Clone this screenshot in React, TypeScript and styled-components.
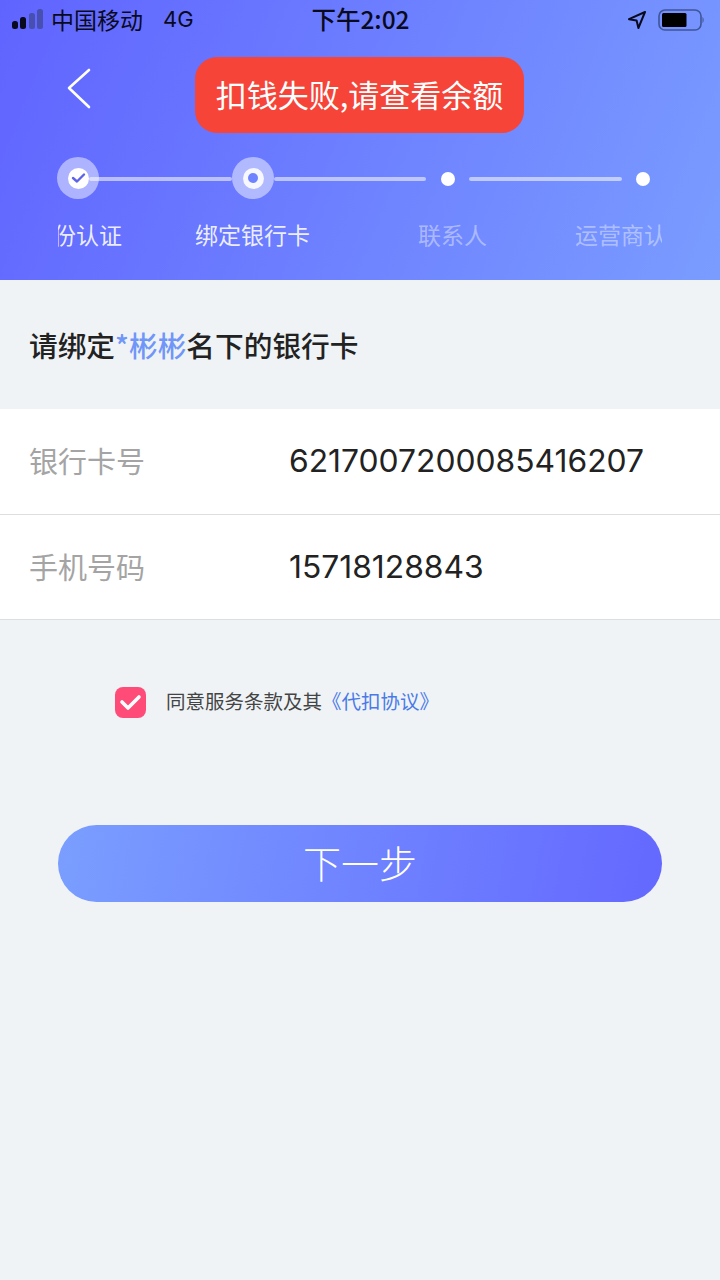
import React from 'react';
import styled, { createGlobalStyle } from 'styled-components';

const CJK = `"Noto Sans CJK SC", "Noto Sans", sans-serif`;
const NUM = `Inter, Roboto, "Noto Sans CJK SC", sans-serif`;

const GlobalStyle = createGlobalStyle`
  html, body { margin: 0; padding: 0; background: #eff3f6; }
  * { box-sizing: border-box; }
`;

const Page = styled.div`
  position: relative;
  width: 720px;
  height: 1280px;
  overflow: hidden;
  background: #eff3f6;
  font-family: ${CJK};
`;

const Header = styled.header`
  height: 280px;
  background: linear-gradient(112deg, #6064ff 0%, #6d80ff 50%, #7a9cff 100%);
`;

const StatusBar = styled.div`
  height: 40px;
  display: grid;
  grid-template-columns: 1fr auto 1fr;
  align-items: center;
  padding: 0 16px 0 12px;
  color: #0a0a1e;
`;

const StatusLeft = styled.div`
  display: flex;
  align-items: center;
  font-size: 23px;
`;

const SignalSlot = styled.div`
  display: flex;
  margin-bottom: 2px;
`;

const Carrier = styled.span`
  margin-left: 7px;
  padding-bottom: 2px;
`;

const Network = styled.span`
  margin-left: 20px;
  padding-bottom: 2px;
  font-family: ${NUM};
  font-size: 22px;
`;

const Clock = styled.div`
  padding-bottom: 3px;
  font-size: 24.5px;
  font-weight: 500;
  margin-left: 5px;
`;

const StatusRight = styled.div`
  display: flex;
  justify-content: flex-end;
  align-items: center;
  gap: 12px;
`;

const NavRow = styled.div`
  height: 97px;
  display: flex;
  align-items: center;
  padding: 0 0 0 66px;
`;

const Toast = styled.div`
  position: absolute;
  left: 195px;
  top: 57px;
  width: 329px;
  height: 76px;
  padding-bottom: 3px;
  border-radius: 22px;
  background: #f64438;
  color: #fff;
  font-size: 31px;
  display: flex;
  align-items: center;
  justify-content: center;
  white-space: nowrap;
`;

const Stepper = styled.div`
  display: flex;
  align-items: center;
  height: 42px;
  margin-top: 20px;
  padding-left: 57px;
`;

const Halo = styled.div`
  position: relative;
  z-index: 1;
  flex: none;
  width: 42px;
  height: 42px;
  border-radius: 50%;
  background: rgba(255, 255, 255, 0.48);
  display: flex;
  align-items: center;
  justify-content: center;
`;

const HaloCore = styled.div`
  width: 21px;
  height: 21px;
  border-radius: 50%;
  background: #fff;
  display: flex;
  align-items: center;
  justify-content: center;
`;

const HaloRing = styled(HaloCore)`
  background: rgba(255, 255, 255, 0.88);
`;

const HaloHole = styled.div`
  width: 10px;
  height: 10px;
  border-radius: 50%;
  background: #6f82ff;
`;

const Line = styled.div<{ $width: number; $left?: number }>`
  flex: none;
  width: ${p => p.$width}px;
  height: 4px;
  margin-top: 1px;
  margin-left: ${p => p.$left ?? 0}px;
  border-radius: 2px;
  background: rgba(255, 255, 255, 0.55);
`;

const Dot = styled.div<{ $left: number }>`
  flex: none;
  width: 14px;
  height: 14px;
  margin-top: 1px;
  margin-left: ${p => p.$left}px;
  border-radius: 50%;
  background: #fff;
`;

const LabelStrip = styled.div`
  display: flex;
  width: 604px;
  margin: 18px 0 0 58px;
  overflow: hidden;
`;

const StepLabel = styled.span<{ $left: number; $dim?: boolean }>`
  flex: none;
  margin-left: ${p => p.$left}px;
  font-size: 23px;
  line-height: 34px;
  white-space: nowrap;
  color: ${p => (p.$dim ? 'rgba(255,255,255,0.42)' : 'rgba(255,255,255,0.88)')};
`;

const Title = styled.h1`
  margin: 0;
  height: 129px;
  padding: 44px 0 0 29px;
  font-size: 28.7px;
  line-height: 42px;
  font-weight: 500;
  color: #222;
`;

const Accent = styled.span`
  color: #7096f8;
`;

const Form = styled.div`
  background: #fff;
  border-bottom: 1px solid #dcdfe2;
`;

const Row = styled.div<{ $height: number; $last?: boolean }>`
  height: ${p => p.$height}px;
  display: flex;
  align-items: center;
  padding-left: 29px;
  border-bottom: ${p => (p.$last ? 'none' : '1px solid #dcdfe2')};
`;

const RowLabel = styled.span`
  width: 260px;
  padding-bottom: 3px;
  font-size: 29px;
  color: #a4a4a4;
`;

const RowValue = styled.span`
  padding-bottom: 2px;
  font-family: ${NUM};
  font-size: 31.8px;
  color: #222;
`;

const Agree = styled.div`
  display: flex;
  align-items: center;
  margin: 66px 0 0 115px;
  font-size: 19.5px;
  color: #444;
`;

const AgreeText = styled.span`
  padding-bottom: 3px;
`;

const Check = styled.div`
  width: 31px;
  height: 31px;
  margin-right: 20px;
  border-radius: 8px;
  background: #ff4b78;
  display: flex;
  align-items: center;
  justify-content: center;
`;

const TermsLink = styled.span`
  color: #4a7ae8;
`;

const NextButton = styled.button`
  display: block;
  width: 604px;
  height: 77px;
  margin: 107px 0 0 58px;
  padding: 0 0 5px;
  border: none;
  border-radius: 38.5px;
  background: linear-gradient(100deg, #7a9eff 0%, #6468ff 100%);
  color: #fff;
  font-family: ${CJK};
  font-size: 38px;
  font-weight: 300;
`;

const SignalIcon = () => (
  <svg width="32" height="22" viewBox="0 0 32 22">
    <rect x="0" y="13" width="6" height="8" rx="2.5" fill="#0a0a1e" />
    <rect x="8" y="9" width="6" height="12" rx="2.5" fill="#0a0a1e" />
    <rect x="17" y="5" width="6" height="16" rx="2.5" fill="#474fb0" />
    <rect x="25" y="1" width="6" height="20" rx="2.5" fill="#474fb0" />
  </svg>
);

const LocationIcon = () => (
  <svg width="18" height="18" viewBox="0 0 18 18">
    <path d="M17 1 L1 8.2 L8.6 9.4 L10.4 17 Z" fill="none" stroke="#0a0a1e" strokeWidth="2" strokeLinejoin="round" />
  </svg>
);

const BatteryIcon = () => (
  <svg width="46" height="22" viewBox="0 0 46 22">
    <rect x="1" y="1" width="42" height="20" rx="6" fill="none" stroke="#3f5596" strokeWidth="1.6" />
    <rect x="4" y="4" width="24.5" height="14" rx="1.5" fill="#000" />
    <path d="M44.5 8 C46 9 46 13 44.5 14 Z" fill="#3f5596" />
  </svg>
);

const BackIcon = () => (
  <svg width="26" height="42" viewBox="0 0 26 42">
    <path d="M23 2 L3 20 L23 39" fill="none" stroke="#fff" strokeWidth="2.6" strokeLinecap="round" strokeLinejoin="round" />
  </svg>
);

const SmallCheck = () => (
  <svg width="15" height="12" viewBox="0 0 15 12">
    <path d="M2 6 L6 9.5 L13 2.5" fill="none" stroke="#5f63e8" strokeWidth="2.4" strokeLinecap="round" strokeLinejoin="round" />
  </svg>
);

const BoxCheck = () => (
  <svg width="23" height="18" viewBox="0 0 23 18">
    <path d="M3 9 L9 15 L20 4" fill="none" stroke="#fff" strokeWidth="3.6" strokeLinecap="round" strokeLinejoin="round" />
  </svg>
);

const App = () => (
  <Page>
    <GlobalStyle />
    <Header>
      <StatusBar>
        <StatusLeft>
          <SignalSlot>
            <SignalIcon />
          </SignalSlot>
          <Carrier>中国移动</Carrier>
          <Network>4G</Network>
        </StatusLeft>
        <Clock>下午2:02</Clock>
        <StatusRight>
          <LocationIcon />
          <BatteryIcon />
        </StatusRight>
      </StatusBar>
      <NavRow>
        <BackIcon />
      </NavRow>
      <Stepper>
        <Halo>
          <HaloCore>
            <SmallCheck />
          </HaloCore>
        </Halo>
        <Line $width={143} $left={-10} />
        <Halo>
          <HaloRing>
            <HaloHole />
          </HaloRing>
        </Halo>
        <Line $width={152} />
        <Dot $left={15} />
        <Line $width={153} $left={14} />
        <Dot $left={14} />
      </Stepper>
      <LabelStrip>
        <StepLabel $left={-28}>身份认证</StepLabel>
        <StepLabel $left={73}>绑定银行卡</StepLabel>
        <StepLabel $left={108} $dim>联系人</StepLabel>
        <StepLabel $left={88} $dim>运营商认证</StepLabel>
      </LabelStrip>
    </Header>
    <Toast>扣钱失败,请查看余额</Toast>
    <Title>
      请绑定<Accent>*彬彬</Accent>名下的银行卡
    </Title>
    <Form>
      <Row $height={106}>
        <RowLabel>银行卡号</RowLabel>
        <RowValue>6217007200085416207</RowValue>
      </Row>
      <Row $height={104} $last>
        <RowLabel>手机号码</RowLabel>
        <RowValue>15718128843</RowValue>
      </Row>
    </Form>
    <Agree>
      <Check>
        <BoxCheck />
      </Check>
      <AgreeText>
        同意服务条款及其<TermsLink>《代扣协议》</TermsLink>
      </AgreeText>
    </Agree>
    <NextButton>下一步</NextButton>
  </Page>
);

export default App;
